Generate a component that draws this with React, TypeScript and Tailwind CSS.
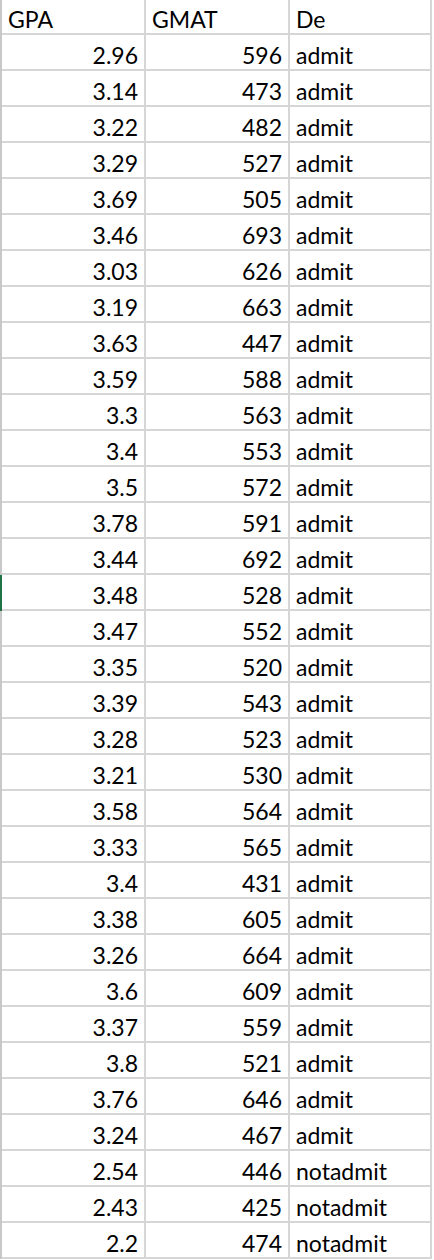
const rows: [string, string, string][] = [
  ["2.96", "596", "admit"],
  ["3.14", "473", "admit"],
  ["3.22", "482", "admit"],
  ["3.29", "527", "admit"],
  ["3.69", "505", "admit"],
  ["3.46", "693", "admit"],
  ["3.03", "626", "admit"],
  ["3.19", "663", "admit"],
  ["3.63", "447", "admit"],
  ["3.59", "588", "admit"],
  ["3.3", "563", "admit"],
  ["3.4", "553", "admit"],
  ["3.5", "572", "admit"],
  ["3.78", "591", "admit"],
  ["3.44", "692", "admit"],
  ["3.48", "528", "admit"],
  ["3.47", "552", "admit"],
  ["3.35", "520", "admit"],
  ["3.39", "543", "admit"],
  ["3.28", "523", "admit"],
  ["3.21", "530", "admit"],
  ["3.58", "564", "admit"],
  ["3.33", "565", "admit"],
  ["3.4", "431", "admit"],
  ["3.38", "605", "admit"],
  ["3.26", "664", "admit"],
  ["3.6", "609", "admit"],
  ["3.37", "559", "admit"],
  ["3.8", "521", "admit"],
  ["3.76", "646", "admit"],
  ["3.24", "467", "admit"],
  ["2.54", "446", "notadmit"],
  ["2.43", "425", "notadmit"],
  ["2.2", "474", "notadmit"],
];

const cell = "border-r-2 border-b-2 border-[#d6d6d6] flex items-end pb-[2px] px-[6px]";

export default function App() {
  return (
    <div className="w-[434px] h-[1260px] overflow-hidden bg-white text-black text-[23px] leading-none font-['Lato',sans-serif]">
      {/* header */}
      <div className="grid grid-cols-[2px_144px_144px_142px] h-[35px]">
        <div className="bg-[#c8c8c8]" />
        <div className={cell}>GPA</div>
        <div className={cell}>GMAT</div>
        <div className={cell}>De</div>
      </div>

      {rows.map(([gpa, gmat, dec], i) => (
        <div key={i} className="grid grid-cols-[2px_144px_144px_142px] h-[36px]">
          <div className={i === 15 ? "bg-[#217346]" : "bg-[#c8c8c8]"} />
          <div className={`${cell} justify-end`}>{gpa}</div>
          <div className={`${cell} justify-end`}>{gmat}</div>
          <div className={cell}>{dec}</div>
        </div>
      ))}
    </div>
  );
}
